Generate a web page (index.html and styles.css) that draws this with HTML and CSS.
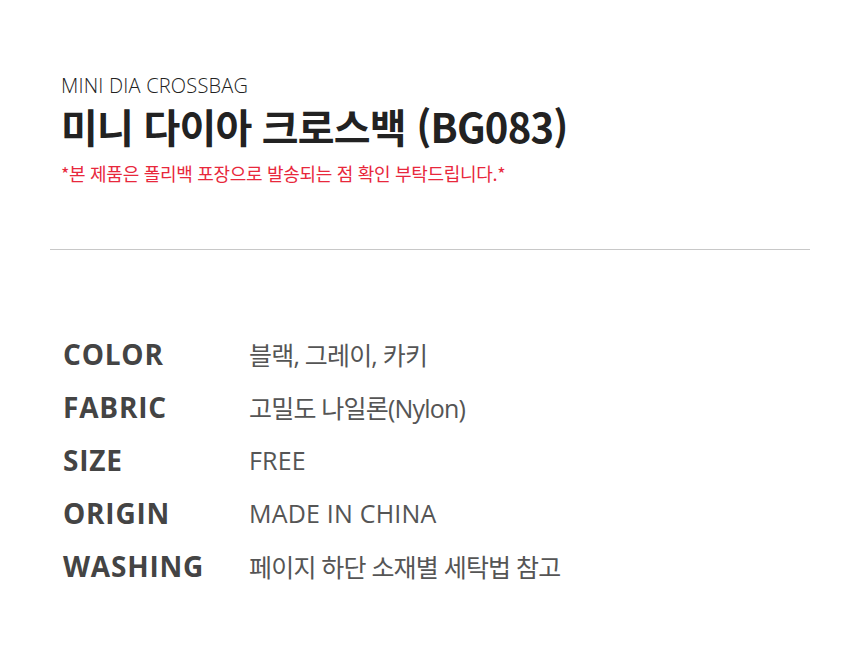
FILE: index.html
```html
<!DOCTYPE html>
<html lang="ko">
<head>
<meta charset="utf-8">
<link rel="stylesheet" href="styles.css">
</head>
<body>
<div class="page">
  <header class="head">
    <div class="eng">MINI DIA CROSSBAG</div>
    <h1 class="title">미니 다이아 크로스백 (BG083)</h1>
    <p class="note">*본 제품은 폴리백 포장으로 발송되는 점 확인 부탁드립니다.*</p>
  </header>
  <hr class="rule">
  <dl class="specs">
    <div class="row"><dt>COLOR</dt><dd>블랙, 그레이, 카키</dd></div>
    <div class="row"><dt>FABRIC</dt><dd>고밀도 나일론(Nylon)</dd></div>
    <div class="row"><dt>SIZE</dt><dd class="latin">FREE</dd></div>
    <div class="row"><dt>ORIGIN</dt><dd class="latin">MADE IN CHINA</dd></div>
    <div class="row"><dt>WASHING</dt><dd>페이지 하단 소재별 세탁법 참고</dd></div>
  </dl>
</div>
</body>
</html>
```

FILE: styles.css
```css
html, body {
  margin: 0;
  padding: 0;
  background: #fff;
}
body {
  font-family: "Noto Sans CJK KR", "Noto Sans", sans-serif;
  color: #222;
}
.page {
  width: 860px;
  height: 646px;
  overflow: hidden;
}
.head {
  padding: 72px 0 0 61px;
}
.eng {
  font-family: "Open Sans", "Noto Sans CJK KR", sans-serif;
  font-size: 20px;
  font-weight: 300;
  line-height: 28px;
  color: #222;
  letter-spacing: 0.2px;
}
.title {
  margin: 0;
  font-size: 40px;
  font-weight: 700;
  line-height: 52px;
  color: #222;
  letter-spacing: -0.8px;
}
.note {
  margin: 9px 0 0;
  font-size: 18px;
  line-height: 24px;
  color: #e8283c;
  letter-spacing: -0.3px;
}
.rule {
  margin: 64px 50px 0;
  border: 0;
  border-top: 1px solid #c8c8c8;
  height: 0;
}
.specs {
  margin: 77px 0 0 63px;
  display: flex;
  flex-direction: column;
}
.row {
  display: flex;
  align-items: center;
  height: 53px;
}
.row dt {
  width: 186px;
  font-family: "Open Sans", "Noto Sans CJK KR", sans-serif;
  font-size: 28px;
  font-weight: 700;
  color: #444;
  letter-spacing: 0.8px;
}
.row dd {
  margin: 0;
  font-family: "Open Sans", "Noto Sans CJK KR", sans-serif;
  font-size: 25px;
  font-weight: 400;
  color: #555;
  letter-spacing: -0.8px;
}
.row dd.latin {
  letter-spacing: 0.2px;
}
```
